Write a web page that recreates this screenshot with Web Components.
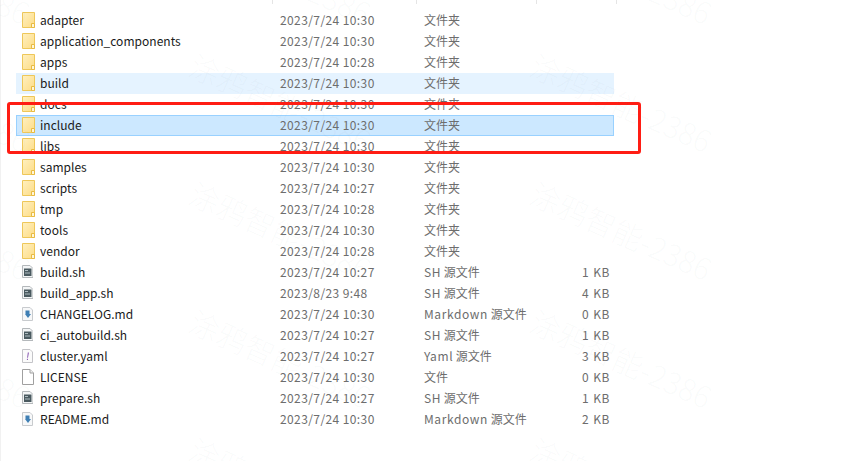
<!doctype html>
<html>
<head>
<meta charset="utf-8">
<style>
  html, body { margin: 0; height: 100%; background: #fff; overflow: hidden; }
  body { box-shadow: inset 1px 0 #f1f1f1; }
</style>
</head>
<body>
<template id="tpl-file-row">
  <style>
    :host {
      display: grid;
      grid-template-columns: 23px 240px 144px 140px 46px;
      align-items: center;
      height: 21px;
      box-sizing: border-box;
      border: 1px solid transparent;
      padding-bottom: 2px;
      font-size: 12px;
      line-height: 17px;
      color: #6d6d6d;
      white-space: nowrap;
    }
    :host([state="hover"]) { background: #e5f3ff; border-color: #e5f3ff; }
    :host([state="selected"]) { background: #cce8ff; border-color: #99d1ff; }
    .ico { display: flex; padding-left: 5px; height: 17px; align-items: center; }
    .name { color: #1a1a1a; letter-spacing: .02px; }
    .date { letter-spacing: .4px; }
    .type b { font-weight: 400; letter-spacing: .6px; }
    .size { text-align: right; letter-spacing: .5px; word-spacing: 1px; }
  </style>
  <div class="ico"></div>
  <div class="name"></div>
  <div class="date"></div>
  <div class="type"><b></b><span></span></div>
  <div class="size"></div>
</template>

<script>
  const PAGE = `M.5.5h7.500l3 3v9H.5z`;
  const ICONS = {
    folder: `<svg width="13" height="16" viewBox="0 0 13 16"><defs><linearGradient id="f" x1="0" y1="0" x2="1" y2="1"><stop offset="0" stop-color="#fff0c0"/><stop offset="1" stop-color="#fddc85"/></linearGradient></defs><path d="M.5.5h12v15H.5z" fill="url(#f)" stroke="#eec759"/><path d="M9.500 15.500v-4h3v4z" fill="#fff6d8" stroke="#e9bb42"/></svg>`,
    sh: `<svg width="11" height="13" viewBox="0 0 11 13"><path d="${PAGE}" fill="#f3f5f6" stroke="#b4b8bb"/><path d="M2 3.500h7.500v7.500H2z" fill="#4a5a60"/><path d="M3 5.500h3M3 8h5" stroke="#aebcc1"/></svg>`,
    md: `<svg width="11" height="14" viewBox="0 0 11 14"><path d="M.5.5h7.500l2.500 2.500v10.500H.5z" fill="#f7f8f9" stroke="#c8cbce"/><path d="M3.500 3.500h4v3.500h1.500l-3 4-3-4h.5z" fill="#3f7fb4"/></svg>`,
    yaml: `<svg width="11" height="14" viewBox="0 0 11 14"><path d="M.5.5h7.500l2.500 2.500v10.500H.5z" fill="#fbfbfb" stroke="#c4c4c8"/><path d="M5.800 3.500h1.200L6 8.700H5.100zM4.900 9.800H6V11H4.900z" fill="#8e5fb5"/></svg>`,
    blank: `<svg width="12" height="16" viewBox="0 0 12 16"><path d="M.5.500h7.500l3.500 3.500v11.500H.5z" fill="#fff" stroke="#a0a0a0"/><path d="M8 .5v3.500h3.500" fill="#f0f0f0" stroke="#a0a0a0"/></svg>`,
  };

  class FileRow extends HTMLElement {
    constructor() {
      super();
      const el = document.querySelector("#tpl-file-row").content.cloneNode(true);
      this.attachShadow({ mode: "open" }).appendChild(el);
    }

    connectedCallback() {
      const root = this.shadowRoot;
      const type = this.getAttribute("type");
      const latin = type.includes(" ") ? type.slice(0, type.indexOf(" ")) : "";
      root.querySelector(".ico").innerHTML = ICONS[this.getAttribute("icon")];
      root.querySelector(".name").textContent = this.getAttribute("name");
      root.querySelector(".date").textContent = this.getAttribute("date");
      root.querySelector(".type b").textContent = latin;
      root.querySelector(".type span").textContent = type.slice(latin.length);
      root.querySelector(".size").textContent = this.getAttribute("size") || "";
    }
  }

  class FileList extends HTMLElement {
    constructor() {
      super();
      this.attachShadow({ mode: "open" }).innerHTML = `
        <style>
          :host {
            display: block;
            padding: 6px 0 0 16px;
            width: 598px;
            font-family: "Noto Sans CJK SC", "Open Sans", sans-serif;
          }
        </style>
        <slot></slot>`;
    }
  }

  // stubs of the explorer column header, cut off by the top of the shot
  class HeadStubs extends HTMLElement {
    constructor() {
      super();
      this.attachShadow({ mode: "open" }).innerHTML = `
        <style>
          :host { display: grid; grid-template-columns: 273px 144px 120px 80px; height: 4px; }
          i { border-right: 1px solid #e5e5e5; }
        </style>
        <i></i><i></i><i></i><i></i>`;
    }
  }

  class RedBox extends HTMLElement {
    constructor() {
      super();
      this.attachShadow({ mode: "open" }).innerHTML = `
        <style>
          :host {
            position: absolute;
            left: 7px;
            top: 102px;
            width: 634px;
            height: 52px;
            box-sizing: border-box;
            border: 3px solid #ff1d14;
            border-radius: 3px;
          }
        </style>`;
    }
  }

  class WaterMarks extends HTMLElement {
    constructor() {
      super();
      const spots = [];
      for (const x of [-148, 193, 534]) {
        for (const y of [-75, 53, 181, 309, 437]) spots.push([x + 5, y - 4]);
      }
      this.attachShadow({ mode: "open" }).innerHTML = `
        <style>
          :host { position: absolute; inset: 0; pointer-events: none; overflow: hidden; }
          span {
            position: absolute;
            font: 300 30px/1 "Noto Sans CJK SC", sans-serif;
            color: rgba(120, 130, 150, .04);
            transform: rotate(24deg);
            transform-origin: 0 0;
            white-space: nowrap;
          }
        </style>
        ${spots.map(([x, y]) => `<span style="left:${x}px;top:${y}px">涂鸦智能-2386</span>`).join("")}`;
    }
  }

  customElements.define("file-row", FileRow);
  customElements.define("file-list", FileList);
  customElements.define("head-stubs", HeadStubs);
  customElements.define("red-box", RedBox);
  customElements.define("water-marks", WaterMarks);

  const files = [
    ["folder", "adapter", "2023/7/24 10:30", "文件夹"],
    ["folder", "application_components", "2023/7/24 10:30", "文件夹"],
    ["folder", "apps", "2023/7/24 10:28", "文件夹"],
    ["folder", "build", "2023/7/24 10:30", "文件夹", "", "hover"],
    ["folder", "docs", "2023/7/24 10:30", "文件夹"],
    ["folder", "include", "2023/7/24 10:30", "文件夹", "", "selected"],
    ["folder", "libs", "2023/7/24 10:30", "文件夹"],
    ["folder", "samples", "2023/7/24 10:30", "文件夹"],
    ["folder", "scripts", "2023/7/24 10:27", "文件夹"],
    ["folder", "tmp", "2023/7/24 10:28", "文件夹"],
    ["folder", "tools", "2023/7/24 10:30", "文件夹"],
    ["folder", "vendor", "2023/7/24 10:28", "文件夹"],
    ["sh", "build.sh", "2023/7/24 10:27", "SH 源文件", "1 KB"],
    ["sh", "build_app.sh", "2023/8/23 9:48", "SH 源文件", "4 KB"],
    ["md", "CHANGELOG.md", "2023/7/24 10:30", "Markdown 源文件", "0 KB"],
    ["sh", "ci_autobuild.sh", "2023/7/24 10:27", "SH 源文件", "1 KB"],
    ["yaml", "cluster.yaml", "2023/7/24 10:27", "Yaml 源文件", "3 KB"],
    ["blank", "LICENSE", "2023/7/24 10:30", "文件", "0 KB"],
    ["sh", "prepare.sh", "2023/7/24 10:27", "SH 源文件", "1 KB"],
    ["md", "README.md", "2023/7/24 10:30", "Markdown 源文件", "2 KB"],
  ];

  const list = document.createElement("file-list");
  for (const [icon, name, date, type, size, state] of files) {
    const row = document.createElement("file-row");
    row.setAttribute("icon", icon);
    row.setAttribute("name", name);
    row.setAttribute("date", date);
    row.setAttribute("type", type);
    if (size) row.setAttribute("size", size);
    if (state) row.setAttribute("state", state);
    list.appendChild(row);
  }
  document.body.append(
    document.createElement("head-stubs"),
    list,
    document.createElement("red-box"),
    document.createElement("water-marks")
  );
</script>
</body>
</html>
